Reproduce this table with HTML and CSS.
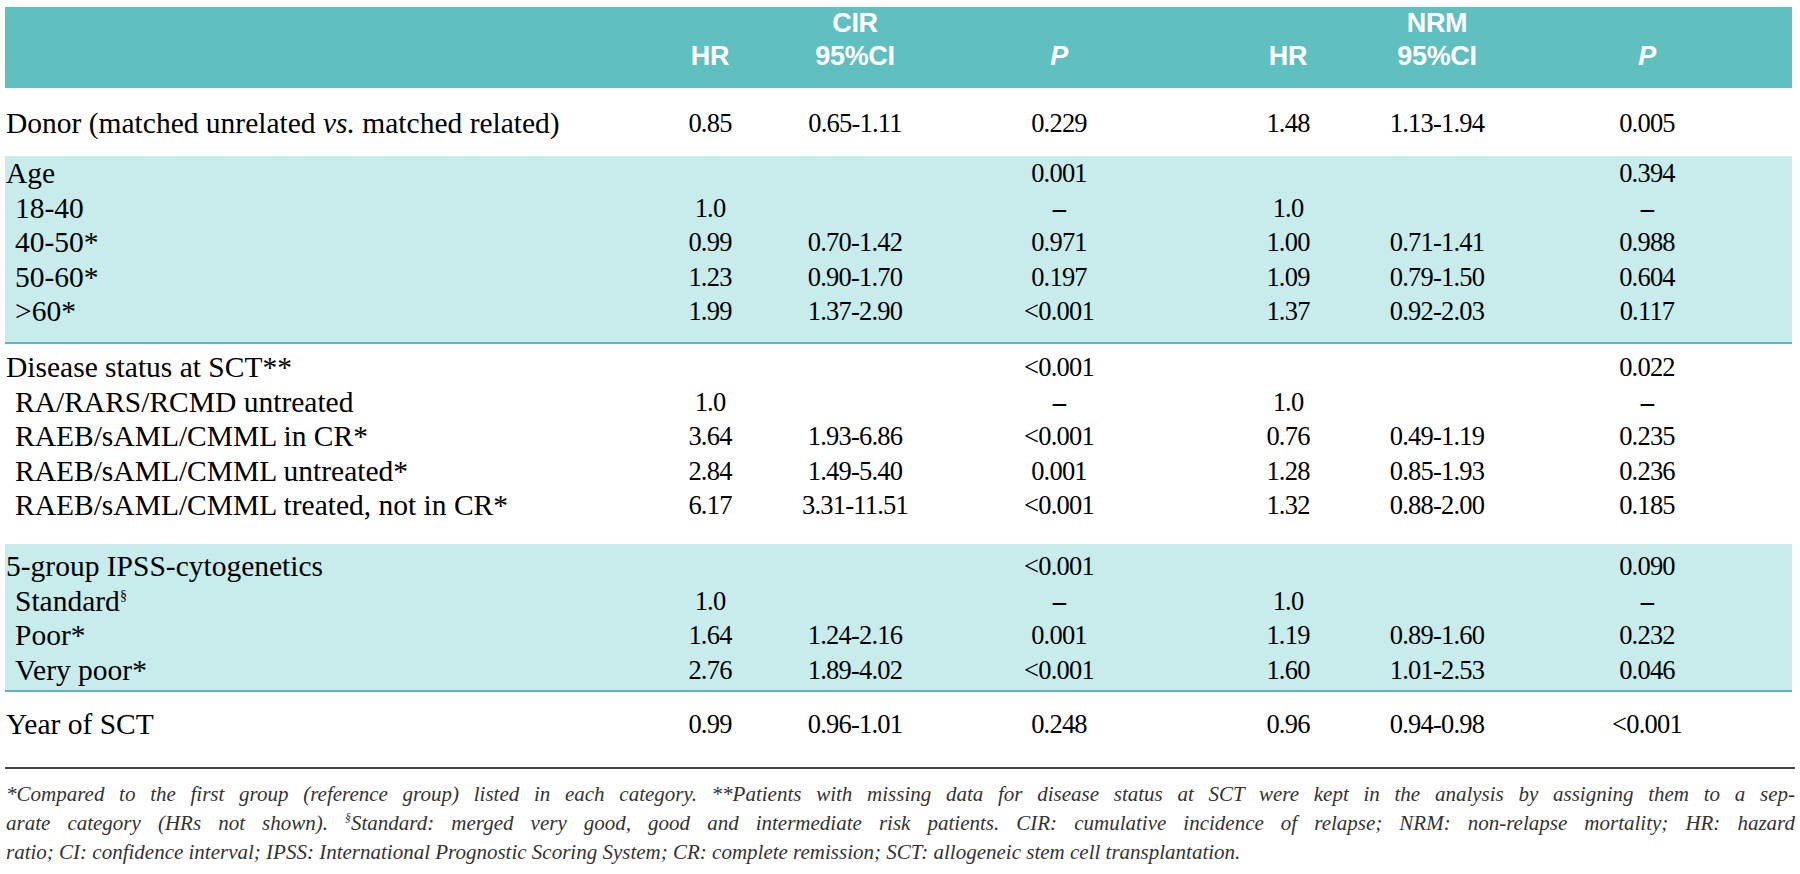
FILE: index.html
```html
<!DOCTYPE html>
<html lang="en">
<head>
<meta charset="utf-8">
<title>CIR and NRM table</title>
<link rel="stylesheet" href="styles.css">
</head>
<body>
<div class="page">
  <div class="head">
    <div class="row hrow"><span></span><span></span><span>CIR</span><span></span><span></span><span>NRM</span><span></span></div>
    <div class="row hrow"><span></span><span>HR</span><span>95%CI</span><span><i>P</i></span><span>HR</span><span>95%CI</span><span><i>P</i></span></div>
  </div>

  <div class="sec s-donor">
    <div class="row d"><span class="lab">Donor (matched unrelated <i>vs.</i> matched related)</span><span class="num">0.85</span><span class="num">0.65-1.11</span><span class="num">0.229</span><span class="num">1.48</span><span class="num">1.13-1.94</span><span class="num">0.005</span></div>
  </div>

  <div class="sec band s-age">
    <div class="row d"><span class="lab">Age</span><span class="num"></span><span class="num"></span><span class="num">0.001</span><span class="num"></span><span class="num"></span><span class="num">0.394</span></div>
    <div class="row d"><span class="lab sub">18-40</span><span class="num">1.0</span><span class="num"></span><span class="num dash">–</span><span class="num">1.0</span><span class="num"></span><span class="num dash">–</span></div>
    <div class="row d"><span class="lab sub">40-50*</span><span class="num">0.99</span><span class="num">0.70-1.42</span><span class="num">0.971</span><span class="num">1.00</span><span class="num">0.71-1.41</span><span class="num">0.988</span></div>
    <div class="row d"><span class="lab sub">50-60*</span><span class="num">1.23</span><span class="num">0.90-1.70</span><span class="num">0.197</span><span class="num">1.09</span><span class="num">0.79-1.50</span><span class="num">0.604</span></div>
    <div class="row d"><span class="lab sub">&gt;60*</span><span class="num">1.99</span><span class="num">1.37-2.90</span><span class="num">&lt;0.001</span><span class="num">1.37</span><span class="num">0.92-2.03</span><span class="num">0.117</span></div>
  </div>

  <div class="sec s-dis">
    <div class="row d"><span class="lab">Disease status at SCT**</span><span class="num"></span><span class="num"></span><span class="num">&lt;0.001</span><span class="num"></span><span class="num"></span><span class="num">0.022</span></div>
    <div class="row d"><span class="lab sub">RA/RARS/RCMD untreated</span><span class="num">1.0</span><span class="num"></span><span class="num dash">–</span><span class="num">1.0</span><span class="num"></span><span class="num dash">–</span></div>
    <div class="row d"><span class="lab sub">RAEB/sAML/CMML in CR*</span><span class="num">3.64</span><span class="num">1.93-6.86</span><span class="num">&lt;0.001</span><span class="num">0.76</span><span class="num">0.49-1.19</span><span class="num">0.235</span></div>
    <div class="row d"><span class="lab sub">RAEB/sAML/CMML untreated*</span><span class="num">2.84</span><span class="num">1.49-5.40</span><span class="num">0.001</span><span class="num">1.28</span><span class="num">0.85-1.93</span><span class="num">0.236</span></div>
    <div class="row d"><span class="lab sub">RAEB/sAML/CMML treated, not in CR*</span><span class="num">6.17</span><span class="num">3.31-11.51</span><span class="num">&lt;0.001</span><span class="num">1.32</span><span class="num">0.88-2.00</span><span class="num">0.185</span></div>
  </div>

  <div class="sec band s-ipss">
    <div class="row d"><span class="lab">5-group IPSS-cytogenetics</span><span class="num"></span><span class="num"></span><span class="num">&lt;0.001</span><span class="num"></span><span class="num"></span><span class="num">0.090</span></div>
    <div class="row d"><span class="lab sub">Standard<sup class="sect">§</sup></span><span class="num">1.0</span><span class="num"></span><span class="num dash">–</span><span class="num">1.0</span><span class="num"></span><span class="num dash">–</span></div>
    <div class="row d"><span class="lab sub">Poor*</span><span class="num">1.64</span><span class="num">1.24-2.16</span><span class="num">0.001</span><span class="num">1.19</span><span class="num">0.89-1.60</span><span class="num">0.232</span></div>
    <div class="row d"><span class="lab sub">Very poor*</span><span class="num">2.76</span><span class="num">1.89-4.02</span><span class="num">&lt;0.001</span><span class="num">1.60</span><span class="num">1.01-2.53</span><span class="num">0.046</span></div>
  </div>

  <div class="sec s-year">
    <div class="row d"><span class="lab">Year of SCT</span><span class="num">0.99</span><span class="num">0.96-1.01</span><span class="num">0.248</span><span class="num">0.96</span><span class="num">0.94-0.98</span><span class="num">&lt;0.001</span></div>
  </div>

  <div class="notes">
    <span class="ln j">*Compared to the first group (reference group) listed in each category. **Patients with missing data for disease status at SCT were kept in the analysis by assigning them to a sep-</span>
    <span class="ln j">arate category (HRs not shown). <sup class="nsect">§</sup>Standard: merged very good, good and intermediate risk patients. CIR: cumulative incidence of relapse; NRM: non-relapse mortality; HR: hazard</span>
    <span class="ln">ratio; CI: confidence interval; IPSS: International Prognostic Scoring System; CR: complete remission; SCT: allogeneic stem cell transplantation.</span>
  </div>
</div>
</body>
</html>
```

FILE: styles.css
```css
html, body {
  margin: 0;
  padding: 0;
  background: #ffffff;
}

.page {
  padding: 7px 0 0 5px;
  width: 1787px;
}

.row {
  display: grid;
  grid-template-columns: 635px 140px 150px 258px 200px 98px 306px;
}

.row > :last-child {
  padding-left: 16px;
}

.head {
  background: #60bfbf;
  color: #ffffff;
  font-family: "Liberation Sans Narrow", "Arial Narrow", "Liberation Sans", sans-serif;
  font-stretch: condensed;
  font-weight: 700;
  font-size: 27px;
  letter-spacing: -0.3px;
  padding: 0 0 15px;
}

.hrow {
  height: 33px;
  line-height: 33px;
}

.hrow span {
  text-align: center;
  white-space: nowrap;
}

.d {
  height: 34.5px;
  line-height: 34.5px;
  font-family: "Liberation Serif", "Times New Roman", serif;
  color: #000000;
}

.lab {
  font-size: 29.5px;
  padding-left: 1px;
  white-space: nowrap;
}

.lab.sub {
  padding-left: 10px;
}

.num {
  font-size: 26.5px;
  letter-spacing: -0.8px;
  text-align: center;
  white-space: nowrap;
}

.dash {
  font-weight: 700;
}

.sect {
  font-size: 14px;
  line-height: 0;
  vertical-align: 11px;
}

.band {
  background: #c8ecec;
  border-bottom: 2px solid #5fb5b5;
}

.s-donor {
  padding: 18px 0 15.5px;
}

.s-age {
  padding: 0 0 13.5px;
}

.s-dis {
  padding: 6px 0 21.5px;
}

.s-ipss {
  padding: 5px 0 3px;
}

.s-year {
  padding: 15px 0 0;
}

.notes {
  margin-top: 25px;
  border-top: 2px solid #444444;
  padding-top: 11px;
  width: 1790px;
  font-family: "Liberation Serif", "Times New Roman", serif;
  font-style: italic;
  font-size: 21px;
  line-height: 29px;
  color: #333333;
}

.ln {
  display: block;
  padding-left: 1px;
}

.ln.j {
  text-align: justify;
  text-align-last: justify;
}

.nsect {
  font-size: 12px;
  line-height: 0;
  vertical-align: 8px;
}
```
